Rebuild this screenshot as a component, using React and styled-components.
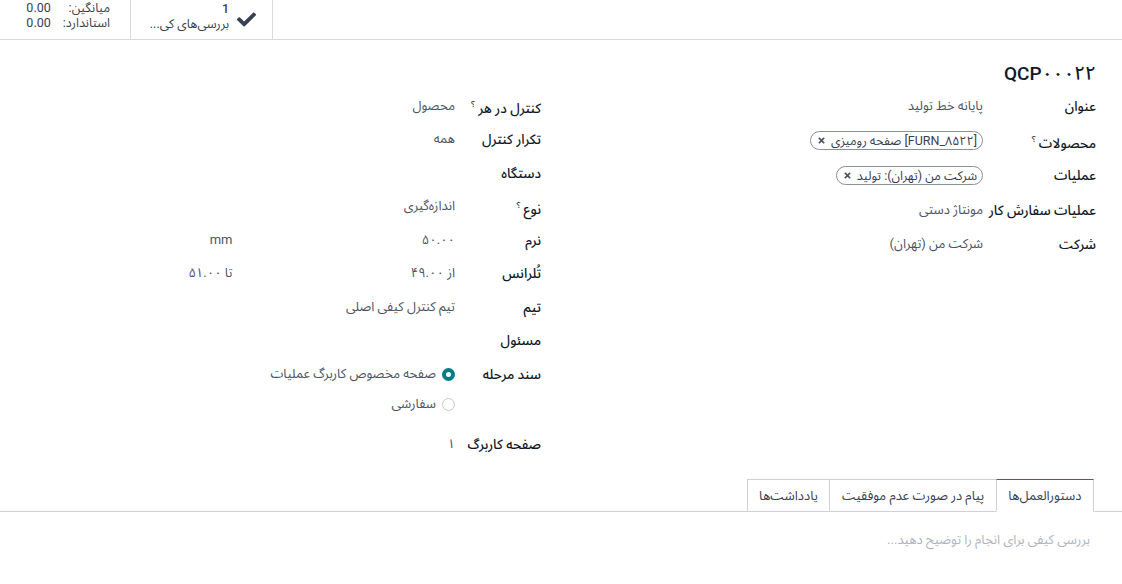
import React from "react";
import styled, { createGlobalStyle } from "styled-components";
import { FaCheck, FaTimes } from "react-icons/fa";

const GlobalStyle = createGlobalStyle`
  body {
    margin: 0;
    background: #ffffff;
    font-family: Roboto, "Noto Sans Arabic", "Noto Sans Arabic UI", "DejaVu Sans", sans-serif;
    color: #374151;
  }
`;

const Page = styled.div`
  direction: rtl;
  width: 1122px;
  min-height: 584px;
  background: #fff;
`;

const ButtonBox = styled.div`
  display: flex;
  justify-content: flex-end;
  height: 39px;
  border-bottom: 1px solid #d8dadd;
`;

const StatButton = styled.div`
  display: flex;
  align-items: center;
  gap: 8px;
  width: ${(p) => p.$width}px;
  box-sizing: border-box;
  border-right: 1px solid #d8dadd;
  padding: 0 16px 0 0;
  font-size: 13px;
  color: #374151;
`;

const StatTable = styled.div`
  display: grid;
  grid-template-columns: auto auto;
  column-gap: 12px;
  line-height: 15px;
  font-size: 12.5px;
  padding-right: 4px;
  margin-top: -9px;
`;

const StatLabel = styled.span`
  color: #374151;
`;

const StatValue = styled.span`
  direction: ltr;
  text-align: left;
  color: #374151;
`;

const StatText = styled.div`
  display: flex;
  flex-direction: column;
  line-height: 15px;
  font-size: 12.5px;
  margin-top: -7px;
  span:first-child {
    font-weight: 500;
  }
`;

const Sheet = styled.div`
  padding: 21px 26px 0 20px;
`;

const Title = styled.h1`
  margin: 0 0 2px;
  font-size: 19px;
  font-weight: 500;
  line-height: 26px;
  color: #111827;
`;

const Groups = styled.div`
  display: grid;
  grid-template-columns: 1fr 1fr;
  column-gap: 24px;
`;

const Group = styled.div`
  display: flex;
  flex-direction: column;
  padding-right: ${(p) => p.$inset || 0}px;
`;

const Row = styled.div`
  display: grid;
  grid-template-columns: ${(p) => p.$labelWidth}px 1fr;
  align-items: ${(p) => (p.$top ? "start" : "center")};
  min-height: ${(p) => p.$height}px;
`;

const Label = styled.div`
  font-size: 13.5px;
  font-weight: 500;
  color: #111827;
  white-space: nowrap;
  line-height: 18px;
  padding-top: ${(p) => (p.$top ? "8px" : "0")};
`;

const Help = styled.sup`
  font-size: 9px;
  font-weight: 500;
  color: #374151;
  margin-right: 3px;
`;

const Value = styled.div`
  font-size: 13px;
  color: #4b5563;
  line-height: 18px;
  display: flex;
  align-items: center;
`;

const Split = styled.div`
  display: grid;
  grid-template-columns: 1fr 1fr;
  column-gap: 10px;
  font-size: 13px;
  color: #4b5563;
  line-height: 18px;
`;

const Tag = styled.span`
  display: inline-flex;
  align-items: center;
  gap: 5px;
  height: 17px;
  padding: 0 5px 0 6px;
  border: 1px solid #8a8f98;
  border-radius: 10px;
  font-size: 12.5px;
  color: #374151;
  line-height: 17px;
  svg {
    color: #4b5563;
  }
`;

const RadioList = styled.div`
  display: flex;
  flex-direction: column;
  padding: 8px 0 8px;
`;

const RadioOption = styled.label`
  display: flex;
  align-items: center;
  gap: 6px;
  height: 30px;
  margin-top: ${(p) => (p.$first ? "-6px" : "0")};
  font-size: 13px;
  color: #4b5563;
`;

const RadioDot = styled.span`
  width: 13px;
  height: 13px;
  box-sizing: border-box;
  border-radius: 50%;
  border: ${(p) => (p.$checked ? "4px solid #017e84" : "1px solid #c4c7cc")};
  background: #fff;
`;

const Tabs = styled.div`
  display: flex;
  margin-top: 18px;
  padding-right: 28px;
  border-bottom: 1px solid #d0d1d6;
  height: 32px;
`;

const Tab = styled.div`
  display: flex;
  align-items: center;
  padding: 0 11.5px;
  margin-bottom: -1px;
  font-size: 13px;
  color: #374151;
  background: #fff;
  border: 1px solid #d0d1d6;
  border-right-width: ${(p) => (p.$active ? "1px" : "0")};
  border-top-color: ${(p) => (p.$active ? "#714b67" : "#d0d1d6")};
  border-bottom-color: ${(p) => (p.$active ? "#fff" : "#d0d1d6")};
`;

const Notes = styled.div`
  padding: 14px 32px;
  font-size: 13px;
  color: #adb5bd;
`;

const rightFields = [
  { label: "عنوان", value: "پایانه خط تولید" },
  { label: "محصولات", help: true, tag: "[FURN_۸۵۲۲] صفحه رومیزی" },
  { label: "عملیات", tag: "شرکت من (تهران): تولید" },
  { label: "عملیات سفارش کار", value: "مونتاژ دستی" },
  { label: "شرکت", value: "شرکت من (تهران)" },
];

const leftFields = [
  { label: "کنترل در هر", help: true, value: "محصول" },
  { label: "تکرار کنترل", value: "همه" },
  { label: "دستگاه", value: "" },
  { label: "نوع", help: true, value: "اندازه‌گیری" },
  { label: "نرم", split: ["۵۰.۰۰", "mm"] },
  { label: "تُلرانس", split: ["از ۴۹.۰۰", "تا ۵۱.۰۰"] },
  { label: "تیم", value: "تیم کنترل کیفی اصلی" },
  { label: "مسئول", value: "" },
];

export default function App() {
  return (
    <Page>
      <GlobalStyle />
      <ButtonBox>
        <StatButton $width={142}>
          <FaCheck size={19} color="#374151" />
          <StatText>
            <span>1</span>
            <span>بررسی‌های کی...</span>
          </StatText>
        </StatButton>
        <StatButton $width={131}>
          <StatTable>
            <StatLabel>میانگین:</StatLabel>
            <StatValue>0.00</StatValue>
            <StatLabel>استاندارد:</StatLabel>
            <StatValue>0.00</StatValue>
          </StatTable>
        </StatButton>
      </ButtonBox>

      <Sheet>
        <Title>QCP۰۰۰۲۲</Title>
        <Groups>
          <Group>
            {rightFields.map((f) => (
              <Row key={f.label} $labelWidth={113} $height={34.5}>
                <Label>
                  {f.label}
                  {f.help && <Help>؟</Help>}
                </Label>
                <Value>
                  {f.tag ? (
                    <Tag>
                      {f.tag}
                      <FaTimes size={9} />
                    </Tag>
                  ) : (
                    f.value
                  )}
                </Value>
              </Row>
            ))}
          </Group>

          <Group $inset={5}>
            {leftFields.map((f) => (
              <Row key={f.label} $labelWidth={86} $height={33.5}>
                <Label>
                  {f.label}
                  {f.help && <Help>؟</Help>}
                </Label>
                {f.split ? (
                  <Split>
                    <span>{f.split[0]}</span>
                    <span>{f.split[1]}</span>
                  </Split>
                ) : (
                  <Value>{f.value}</Value>
                )}
              </Row>
            ))}
            <Row $labelWidth={86} $height={69} $top>
              <Label $top>سند مرحله</Label>
              <RadioList>
                <RadioOption $first>
                  <RadioDot $checked />
                  صفحه مخصوص کاربرگ عملیات
                </RadioOption>
                <RadioOption>
                  <RadioDot />
                  سفارشی
                </RadioOption>
              </RadioList>
            </Row>
            <Row $labelWidth={86} $height={34}>
              <Label>صفحه کاربرگ</Label>
              <Value>۱</Value>
            </Row>
          </Group>
        </Groups>
      </Sheet>

      <Tabs>
        <Tab $active>دستورالعمل‌ها</Tab>
        <Tab>پیام در صورت عدم موفقیت</Tab>
        <Tab>یادداشت‌ها</Tab>
      </Tabs>
      <Notes>بررسی کیفی برای انجام را توضیح دهید...</Notes>
    </Page>
  );
}
